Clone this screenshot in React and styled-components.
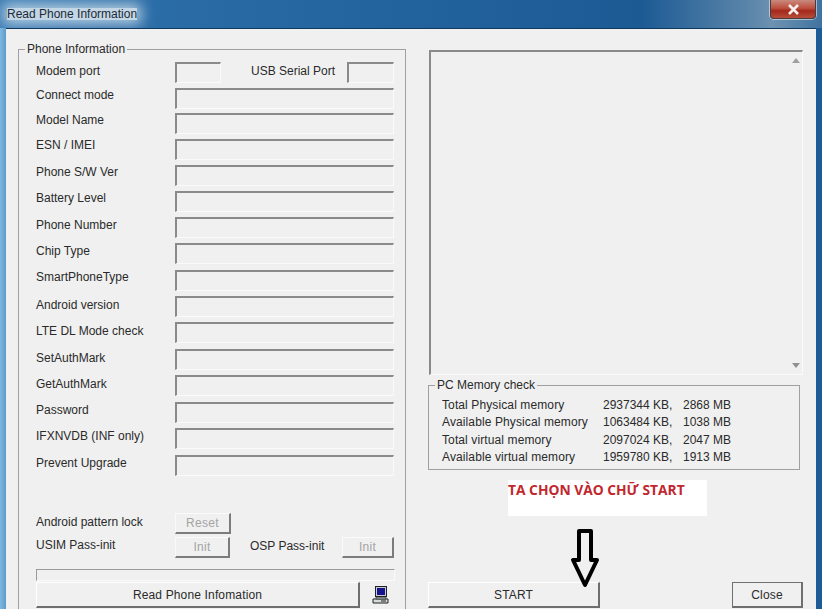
import styled, { createGlobalStyle } from 'styled-components';

const Global = createGlobalStyle`
	html, body { margin: 0; padding: 0; background: #1d5c96; }
	body { font-family: "Liberation Sans", Arial, sans-serif; font-size: 12px; color: #2a2a2a; }
`

const Win = styled.div`
	width: 822px;
	height: 609px;
	overflow: hidden;
	display: flex;
	flex-direction: column;
	background: linear-gradient(90deg, #7fb8e0 0, #5a9bcd 6px, #1d5c96 7px);
`
const TitleBar = styled.div`
	flex: 0 0 28px;
	display: flex;
	justify-content: space-between;
	align-items: flex-start;
	overflow: hidden;
	background: linear-gradient(90deg, #3a7cb4 0, #2a6ca6 20%, #1c5a94 78%, #5f88ab 92%, #6d92b1 94%, #3f739f 100%);
`
const Title = styled.span`
	margin: 8px 0 0 7px;
	font-size: 12px;
	line-height: 12px;
	color: #1c2a36;
	background: #c2d6e6;
	box-shadow: 0 0 14px 4px rgba(194, 214, 230, 0.95);
`
const CloseX = styled.div`
	width: 44px;
	height: 18px;
	margin-right: 6px;
	display: flex;
	align-items: center;
	justify-content: center;
	border: 1px solid #4a3a3c;
	border-top: 0;
	border-radius: 0 0 4px 4px;
	box-shadow: 0 0 0 1px rgba(255, 255, 255, 0.5);
	background: linear-gradient(180deg, #c98a7e 0, #bd4f3f 45%, #a5281c 60%, #b64e3a 100%);
`
const Client = styled.div`
	flex: 1;
	margin: 0 6px;
	background: #f0f0f0;
	border-top: 1px solid #123a5f;
	display: flex;
	padding: 14px 13px 0 12px;
	min-height: 0;
`
const LeftCol = styled.div`
	width: 388px;
	flex: none;
`
const RightCol = styled.div`
	width: 375px;
	margin: 7px 0 0 22px;
	display: flex;
	flex-direction: column;
`
const Group = styled.fieldset`
	margin: 0;
	padding: 0;
	min-width: 0;
	border: 1px solid #a0a0a0;
	box-sizing: border-box;
	legend {
		padding: 0 2px;
		font-size: 12px;
		line-height: 13px;
		color: #2a2a2a;
	}
`
const PhoneGroup = styled(Group)`
	height: 576px;
	border-bottom: 0;
	padding: 6px 11px 0 17px;
	legend {
		margin-left: -11px;
	}
`
const Row = styled.div`
	display: flex;
	align-items: flex-start;
	height: ${p => p.$h}px;
`
const Label = styled.span`
	width: 139px;
	flex: none;
	padding-top: ${p => p.$top || 0}px;
	line-height: 12px;
`
const Field = styled.div`
	box-sizing: border-box;
	width: ${p => p.$w ? p.$w + 'px' : '220px'};
	height: 21px;
	background: #f0f0f0;
	border-top: 2px solid #8a8a8a;
	border-left: 2px solid #8a8a8a;
	border-right: 1px solid #fafafa;
	border-bottom: 1px solid #fafafa;
`
const UsbLabel = styled.span`
	flex: none;
	width: 86px;
	margin: 3px 10px 0 30px;
	line-height: 12px;
	white-space: nowrap;
`
const OspLabel = styled.span`
	flex: none;
	width: 72px;
	margin: 3px 20px 0 20px;
	line-height: 12px;
	white-space: nowrap;
`
const SmallBtn = styled.div`
	box-sizing: border-box;
	width: ${p => p.$w}px;
	height: 21px;
	display: flex;
	align-items: center;
	justify-content: center;
	color: #a4a4a4;
	letter-spacing: 0.3px;
	background: #f0f0f0;
	border-top: 1px solid #fafafa;
	border-left: 1px solid #fafafa;
	border-right: 2px solid #7c7c7c;
	border-bottom: 2px solid #7c7c7c;
`
const Progress = styled.div`
	box-sizing: border-box;
	width: 359px;
	height: 12px;
	margin-top: 11px;
	border-top: 1px solid #9a9a9a;
	border-left: 1px solid #9a9a9a;
	border-right: 1px solid #fafafa;
	border-bottom: 1px solid #fafafa;
`
const BottomRow = styled.div`
	display: flex;
	align-items: center;
	margin-top: 1px;
`
const PushBtn = styled.div`
	box-sizing: border-box;
	width: ${p => p.$w}px;
	height: 26px;
	display: flex;
	align-items: center;
	justify-content: center;
	color: #2a2a2a;
	letter-spacing: 0.15px;
	background: #f0f0f0;
	border-top: 1px solid #ffffff;
	border-left: 1px solid #ffffff;
	border-right: 2px solid #6e6e6e;
	border-bottom: 2px solid #6e6e6e;
	outline: ${p => p.$framed ? '1px solid #707070' : 'none'};
	outline-offset: -1px;
`
const PcIcon = styled.svg`
	margin-left: 12px;
	width: 17px;
	height: 18px;
`
const LogBox = styled.div`
	box-sizing: border-box;
	height: 325px;
	margin-left: 1px;
	width: 374px;
	padding: 6px 0;
	display: flex;
	justify-content: flex-end;
	background: #f0f0f0;
	border-top: 2px solid #8a8a8a;
	border-left: 2px solid #8a8a8a;
	border-right: 1px solid #fafafa;
	border-bottom: 1px solid #fafafa;
`
const ScrollTrack = styled.div`
	width: 12px;
	display: flex;
	flex-direction: column;
	justify-content: space-between;
	align-items: center;
`
const MemGroup = styled(Group)`
	width: 372px;
	height: 91px;
	margin-top: 4px;
	padding: 5px 0 0 13px;
	legend {
		margin-left: -7px;
	}
`
const MemRow = styled.div`
	display: grid;
	grid-template-columns: 161px 80px auto;
	height: 17.4px;
	line-height: 17px;
`
const MemName = styled.span`
	letter-spacing: 0.11px;
	white-space: nowrap;
`
const Note = styled.div`
	box-sizing: border-box;
	width: 199px;
	height: 36px;
	margin: 10px 0 0 80px;
	background: #fff;
	color: #c1272d;
	font-family: "Open Sans", sans-serif;
	font-weight: 700;
	font-size: 13.8px;
	line-height: 20px;
	white-space: nowrap;
`
const ActionRow = styled.div`
	display: flex;
	justify-content: space-between;
	width: 375px;
	margin-top: 66px;
	position: relative;
`
const Arrow = styled.svg`
	position: absolute;
	left: 141px;
	top: -55px;
	width: 32px;
	height: 64px;
`

const phoneRows = [
	['Connect mode', 25, 1],
	['Model Name', 26, 1],
	['ESN / IMEI', 26, 0],
	['Phone S/W Ver', 26, 1],
	['Battery Level', 26, 1],
	['Phone Number', 26, 2],
	['Chip Type', 27, 2],
	['SmartPhoneType', 26, 1],
	['Android version', 26, 3],
	['LTE DL Mode check', 27, 3],
	['SetAuthMark', 26, 3],
	['GetAuthMark', 27, 3],
	['Password', 26, 2],
	['IFXNVDB (INF only)', 27, 2],
	['Prevent Upgrade', 58, 2],
]

const memRows = [
	['Total Physical memory', '2937344 KB,', '2868 MB'],
	['Available Physical memory', '1063484 KB,', '1038 MB'],
	['Total virtual memory', '2097024 KB,', '2047 MB'],
	['Available virtual memory', '1959780 KB,', '1913 MB'],
]

export default function App () {
	return (
		<Win>
			<Global />
			<TitleBar>
				<Title>Read Phone Information</Title>
				<CloseX>
					<svg width="13" height="11" viewBox="0 0 13 11">
						<path d="M2 1 L11 10 M11 1 L2 10" stroke="#f4f0ee" strokeWidth="2.6" />
					</svg>
				</CloseX>
			</TitleBar>
			<Client>
				<LeftCol>
					<PhoneGroup>
						<legend>Phone Information</legend>
						<Row $h={26}>
							<Label $top={3}>Modem port</Label>
							<Field $w={46} />
							<UsbLabel>USB Serial Port</UsbLabel>
							<Field $w={47} />
						</Row>
						{phoneRows.map(([text, h, top]) => (
							<Row key={text} $h={h}>
								<Label $top={top}>{text}</Label>
								<Field />
							</Row>
						))}
						<Row $h={24}>
							<Label $top={3}>Android pattern lock</Label>
							<SmallBtn $w={56}>Reset</SmallBtn>
						</Row>
						<Row $h={21}>
							<Label $top={2}>USIM Pass-init</Label>
							<SmallBtn $w={56}>Init</SmallBtn>
							<OspLabel>OSP Pass-init</OspLabel>
							<SmallBtn $w={53}>Init</SmallBtn>
						</Row>
						<Progress />
						<BottomRow>
							<PushBtn $w={324}>Read Phone Infomation</PushBtn>
							<PcIcon viewBox="0 0 17 18">
								<rect x="3.5" y="0.5" width="11" height="10" fill="#c8ccd0" stroke="#222" />
								<rect x="5" y="2" width="8" height="7" fill="#14148c" />
								<path d="M1 13 L16 13 L16 17 L1 17 Z" fill="#d8dcd8" stroke="#222" />
								<path d="M4 11 L14 11 L14 13 L4 13 Z" fill="#9aa" stroke="#222" strokeWidth="0.6" />
								<rect x="9" y="14.5" width="5" height="1" fill="#222" />
							</PcIcon>
						</BottomRow>
					</PhoneGroup>
				</LeftCol>
				<RightCol>
					<LogBox>
						<ScrollTrack>
							<svg width="8" height="5" viewBox="0 0 8 5"><path d="M4 0 L8 5 L0 5 Z" fill="#a0a0a0" /></svg>
							<svg width="8" height="5" viewBox="0 0 8 5"><path d="M0 0 L8 0 L4 5 Z" fill="#909090" /></svg>
						</ScrollTrack>
					</LogBox>
					<MemGroup>
						<legend>PC Memory check</legend>
						{memRows.map(([name, kb, mb]) => (
							<MemRow key={name}>
								<MemName>{name}</MemName>
								<span>{kb}</span>
								<span>{mb}</span>
							</MemRow>
						))}
					</MemGroup>
					<Note>TA CHỌN VÀO CHỮ START</Note>
					<ActionRow>
						<PushBtn $w={172}>START</PushBtn>
						<PushBtn $w={71} $framed>Close</PushBtn>
						<Arrow viewBox="0 0 32 64">
							<path d="M10 4 L22 4 L22 33 L28 33 L16 58 L4 33 L10 33 Z" fill="none" stroke="#000" strokeWidth="4" strokeLinejoin="round" />
						</Arrow>
					</ActionRow>
				</RightCol>
			</Client>
		</Win>
	);
}
